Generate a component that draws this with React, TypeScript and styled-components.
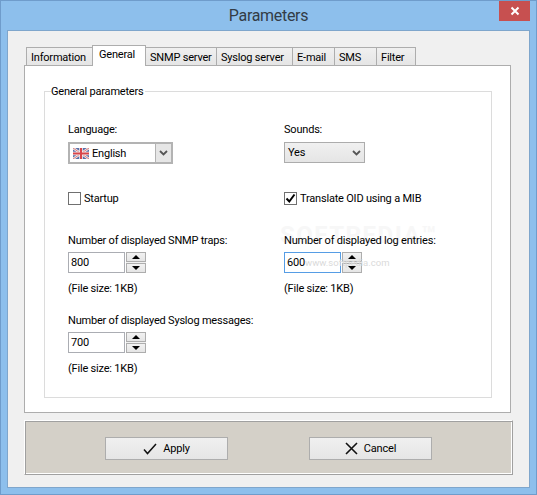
import React from "react";
import styled, { createGlobalStyle } from "styled-components";

const Global = createGlobalStyle`
  html, body { margin: 0; padding: 0; background: #8dbfec; }
  * { box-sizing: border-box; }
  body { font-family: Roboto, "Liberation Sans", Arial, sans-serif; font-size: 11px; letter-spacing: -0.2px; color: #000; }
`;

const Frame = styled.div`
  width: 537px; height: 495px;
  background: #8dbfec;
  border: 1px solid #6f9ccb;
  padding: 0 6px 6px 6px;
  display: flex; flex-direction: column;
`;
const TitleBar = styled.div`
  height: 29px;
  display: grid; grid-template-columns: 1fr auto 1fr; align-items: start;
`;
const Title = styled.div`
  font-size: 16px; line-height: 30px; color: #333c46; letter-spacing: -0.3px;
`;
const CloseBox = styled.div`
  justify-self: end;
  width: 31px; height: 20px;
  background: #c75050;
  display: flex; align-items: center; justify-content: center;
`;
const Client = styled.div`
  flex: 1;
  background: #f0f0f0;
  border: 1px solid #7fa6cc;
  padding: 15px 17px 12px 16px;
  display: flex; flex-direction: column;
`;
const TabStrip = styled.div`
  display: flex; align-items: flex-end;
  height: 20px;
  padding-left: 2px;
  position: relative; z-index: 1; margin-bottom: -1px;
`;
const Tab = styled.div<{ $w: number; $active?: boolean }>`
  width: ${(p) => p.$w}px;
  height: ${(p) => (p.$active ? 21 : 19)}px;
  margin-right: -1px;
  border: 1px solid #adadad;
  border-bottom: ${(p) => (p.$active ? "none" : "1px solid #adadad")};
  background: ${(p) => (p.$active ? "#fff" : "linear-gradient(#f0f0f0, #e5e5e5)")};
  position: relative;
  z-index: ${(p) => (p.$active ? 2 : 0)};
  padding: ${(p) => (p.$active ? "2px" : "3px")} 0 0 ${(p) => (p.$active ? 6 : 4)}px;
  line-height: 14px;
  white-space: nowrap;
`;
const Page = styled.div`
  width: 487px; height: 348px;
  background: #fff;
  border: 1px solid #adadad;
  padding: 18px 18px 15px 19px;
`;
const Group = styled.fieldset`
  margin: 0; padding: 0;
  height: 314px;
  border: 1px solid #dcdcdc;
`;
const Legend = styled.legend`
  margin-left: 6px; padding: 0 1px 0 0;
  line-height: 14px; background: #fff;
  position: relative; top: 1px;
`;
const Form = styled.div`
  display: grid; grid-template-columns: 216px 1fr;
  margin-top: 25px; padding-left: 23px;
`;
const Cell = styled.div<{ $h: number }>`
  height: ${(p) => p.$h}px;
  position: relative;
`;
const Label = styled.div`
  line-height: 14px; margin-bottom: 4px; white-space: nowrap; position: relative;
`;
const Combo = styled.div`
  width: 105px; height: 22px;
  margin-top: 5px;
  border: 2px solid #b3b3b3;
  background: #fff;
  display: flex; align-items: stretch;
`;
const ComboValue = styled.div`
  flex: 1; display: flex; align-items: center; gap: 3px; padding-left: 3px;
`;
const ComboButton = styled.div`
  width: 16px; background: #e6e6e6; border-left: 1px solid #b3b3b3;
  display: flex; align-items: center; justify-content: center;
`;
const Select = styled.div`
  width: 81px; height: 21px;
  margin-top: 5px;
  border: 1px solid #acacac;
  background: linear-gradient(#f0f0f0, #e5e5e5);
  display: flex; align-items: center; justify-content: space-between;
  padding: 0 3px 0 3px;
`;
const CheckRow = styled.div`
  display: flex; align-items: center; gap: 3px; height: 14px;
`;
const CheckBox = styled.div`
  width: 13px; height: 13px;
  border: 1px solid #707070; background: #fff;
  display: flex; align-items: center; justify-content: center;
`;
const SpinRow = styled.div`
  display: flex; gap: 1px; margin-bottom: 9px;
`;
const SpinInput = styled.div<{ $focus?: boolean }>`
  width: 57px; height: 21px;
  border: 1px solid ${(p) => (p.$focus ? "#569de5" : "#abadb3")};
  background: #fff;
  line-height: 19px; padding-left: 2px;
`;
const SpinButtons = styled.div`
  width: 20px; height: 21px;
  background: #f0f0f0;
  display: flex; flex-direction: column; gap: 1px;
`;
const SpinButton = styled.div`
  flex: 1;
  border: 1px solid #adadad;
  background: linear-gradient(#f2f2f2, #e5e5e5);
  display: flex; align-items: center; justify-content: center;
`;
const Arrow = styled.div<{ $up?: boolean }>`
  width: 0; height: 0;
  border-left: 4px solid transparent; border-right: 4px solid transparent;
  ${(p) => (p.$up ? "border-bottom: 4px solid #000;" : "border-top: 4px solid #000;")}
`;
const Note = styled.div`
  line-height: 14px; white-space: nowrap;
`;
const Watermark = styled.div`
  position: absolute; left: -4px; top: -11px;
  font-size: 24px; letter-spacing: 1.5px; font-weight: bold; line-height: 24px;
  color: #f7f7f7; white-space: nowrap; pointer-events: none;
`;
const WatermarkUrl = styled.div`
  position: absolute; left: 21px; top: 22px;
  font-size: 9.5px; line-height: 14px; letter-spacing: 0;
  color: #dadada; white-space: nowrap; pointer-events: none;
`;
const Panel = styled.div`
  width: 489px; height: 55px;
  margin-top: 7px;
  background: #d4d0c8;
  border: 1px solid;
  border-color: #fff #a0a0a0 #a0a0a0 #fff;
  box-shadow: inset 1px 1px 0 #a0a0a0, inset -1px -1px 0 #fff;
  padding: 16px 0 0 80px;
  display: flex; gap: 81px;
`;
const Button = styled.div`
  width: 123px; height: 23px;
  border: 1px solid #adadad;
  background: linear-gradient(#f0f0f0, #e5e5e5);
  display: flex; align-items: center; justify-content: center; gap: 6px;
`;

const Flag = () => (
  <svg width="16" height="11" viewBox="0 0 16 11">
    <rect width="16" height="11" fill="#5a6fa8" />
    <path d="M0 0L16 11M16 0L0 11" stroke="#f2eeee" strokeWidth="2.4" />
    <path d="M0 0L16 11M16 0L0 11" stroke="#d65a5a" strokeWidth="0.8" />
    <path d="M8 0V11M0 5.5H16" stroke="#f2eeee" strokeWidth="3.6" />
    <path d="M8 0V11M0 5.5H16" stroke="#d8454a" strokeWidth="2" />
  </svg>
);
const Chevron = () => (
  <svg width="9" height="6" viewBox="0 0 9 6">
    <path d="M1 1L4.5 4.5L8 1" fill="none" stroke="#555" strokeWidth="1.8" />
  </svg>
);
const Spin = ({ value, focus }: { value: string; focus?: boolean }) => (
  <SpinRow>
    <SpinInput $focus={focus}>{value}</SpinInput>
    <SpinButtons>
      <SpinButton><Arrow $up /></SpinButton>
      <SpinButton><Arrow /></SpinButton>
    </SpinButtons>
  </SpinRow>
);

const tabs: [string, number, boolean?][] = [
  ["Information", 67],
  ["General", 54, true],
  ["SNMP server", 72],
  ["Syslog server", 77],
  ["E-mail", 43],
  ["SMS", 43],
  ["Filter", 40],
];

export default function App() {
  return (
    <>
      <Global />
      <Frame>
        <TitleBar>
          <span />
          <Title>Parameters</Title>
          <CloseBox>
            <svg width="10" height="10" viewBox="0 0 10 10">
              <path d="M1.5 1.5L8.5 8.5M8.5 1.5L1.5 8.5" stroke="#fff" strokeWidth="2" />
            </svg>
          </CloseBox>
        </TitleBar>
        <Client>
          <TabStrip>
            {tabs.map(([t, w, a]) => (
              <Tab key={t} $w={w} $active={a}>{t}</Tab>
            ))}
          </TabStrip>
          <Page>
            <Group>
              <Legend>General parameters</Legend>
              <Form>
                <Cell $h={68}>
                  <Label>Language:</Label>
                  <Combo>
                    <ComboValue><Flag />English</ComboValue>
                    <ComboButton><Chevron /></ComboButton>
                  </Combo>
                </Cell>
                <Cell $h={68}>
                  <Label>Sounds:</Label>
                  <Select>Yes<Chevron /></Select>
                </Cell>
                <Cell $h={43}>
                  <CheckRow><CheckBox />Startup</CheckRow>
                </Cell>
                <Cell $h={43}>
                  <CheckRow>
                    <CheckBox>
                      <svg width="11" height="11" viewBox="0 0 11 11">
                        <path d="M1.5 5.5L4.3 8.5L9.5 1.5" fill="none" stroke="#000" strokeWidth="2" />
                      </svg>
                    </CheckBox>
                    Translate OID using a MIB
                  </CheckRow>
                </Cell>
                <Cell $h={80}>
                  <Label>Number of displayed SNMP traps:</Label>
                  <Spin value="800" />
                  <Note>(File size: 1KB)</Note>
                </Cell>
                <Cell $h={80}>
                  <Watermark>SOFTPEDIA™</Watermark>
                  <Label>Number of displayed log entries:</Label>
                  <Spin value="600" focus />
                  <Note>(File size: 1KB)</Note>
                  <WatermarkUrl>www.softpedia.com</WatermarkUrl>
                </Cell>
                <Cell $h={60}>
                  <Label>Number of displayed Syslog messages:</Label>
                  <Spin value="700" />
                  <Note>(File size: 1KB)</Note>
                </Cell>
              </Form>
            </Group>
          </Page>
          <Panel>
            <Button>
              <svg width="14" height="12" viewBox="0 0 14 12">
                <path d="M1 6.5L4.5 10.5L13 1" fill="none" stroke="#111" strokeWidth="1.5" />
              </svg>
              Apply
            </Button>
            <Button>
              <svg width="13" height="13" viewBox="0 0 13 13">
                <path d="M1 1L12 12M12 1L1 12" fill="none" stroke="#111" strokeWidth="1.6" />
              </svg>
              Cancel
            </Button>
          </Panel>
        </Client>
      </Frame>
    </>
  );
}
